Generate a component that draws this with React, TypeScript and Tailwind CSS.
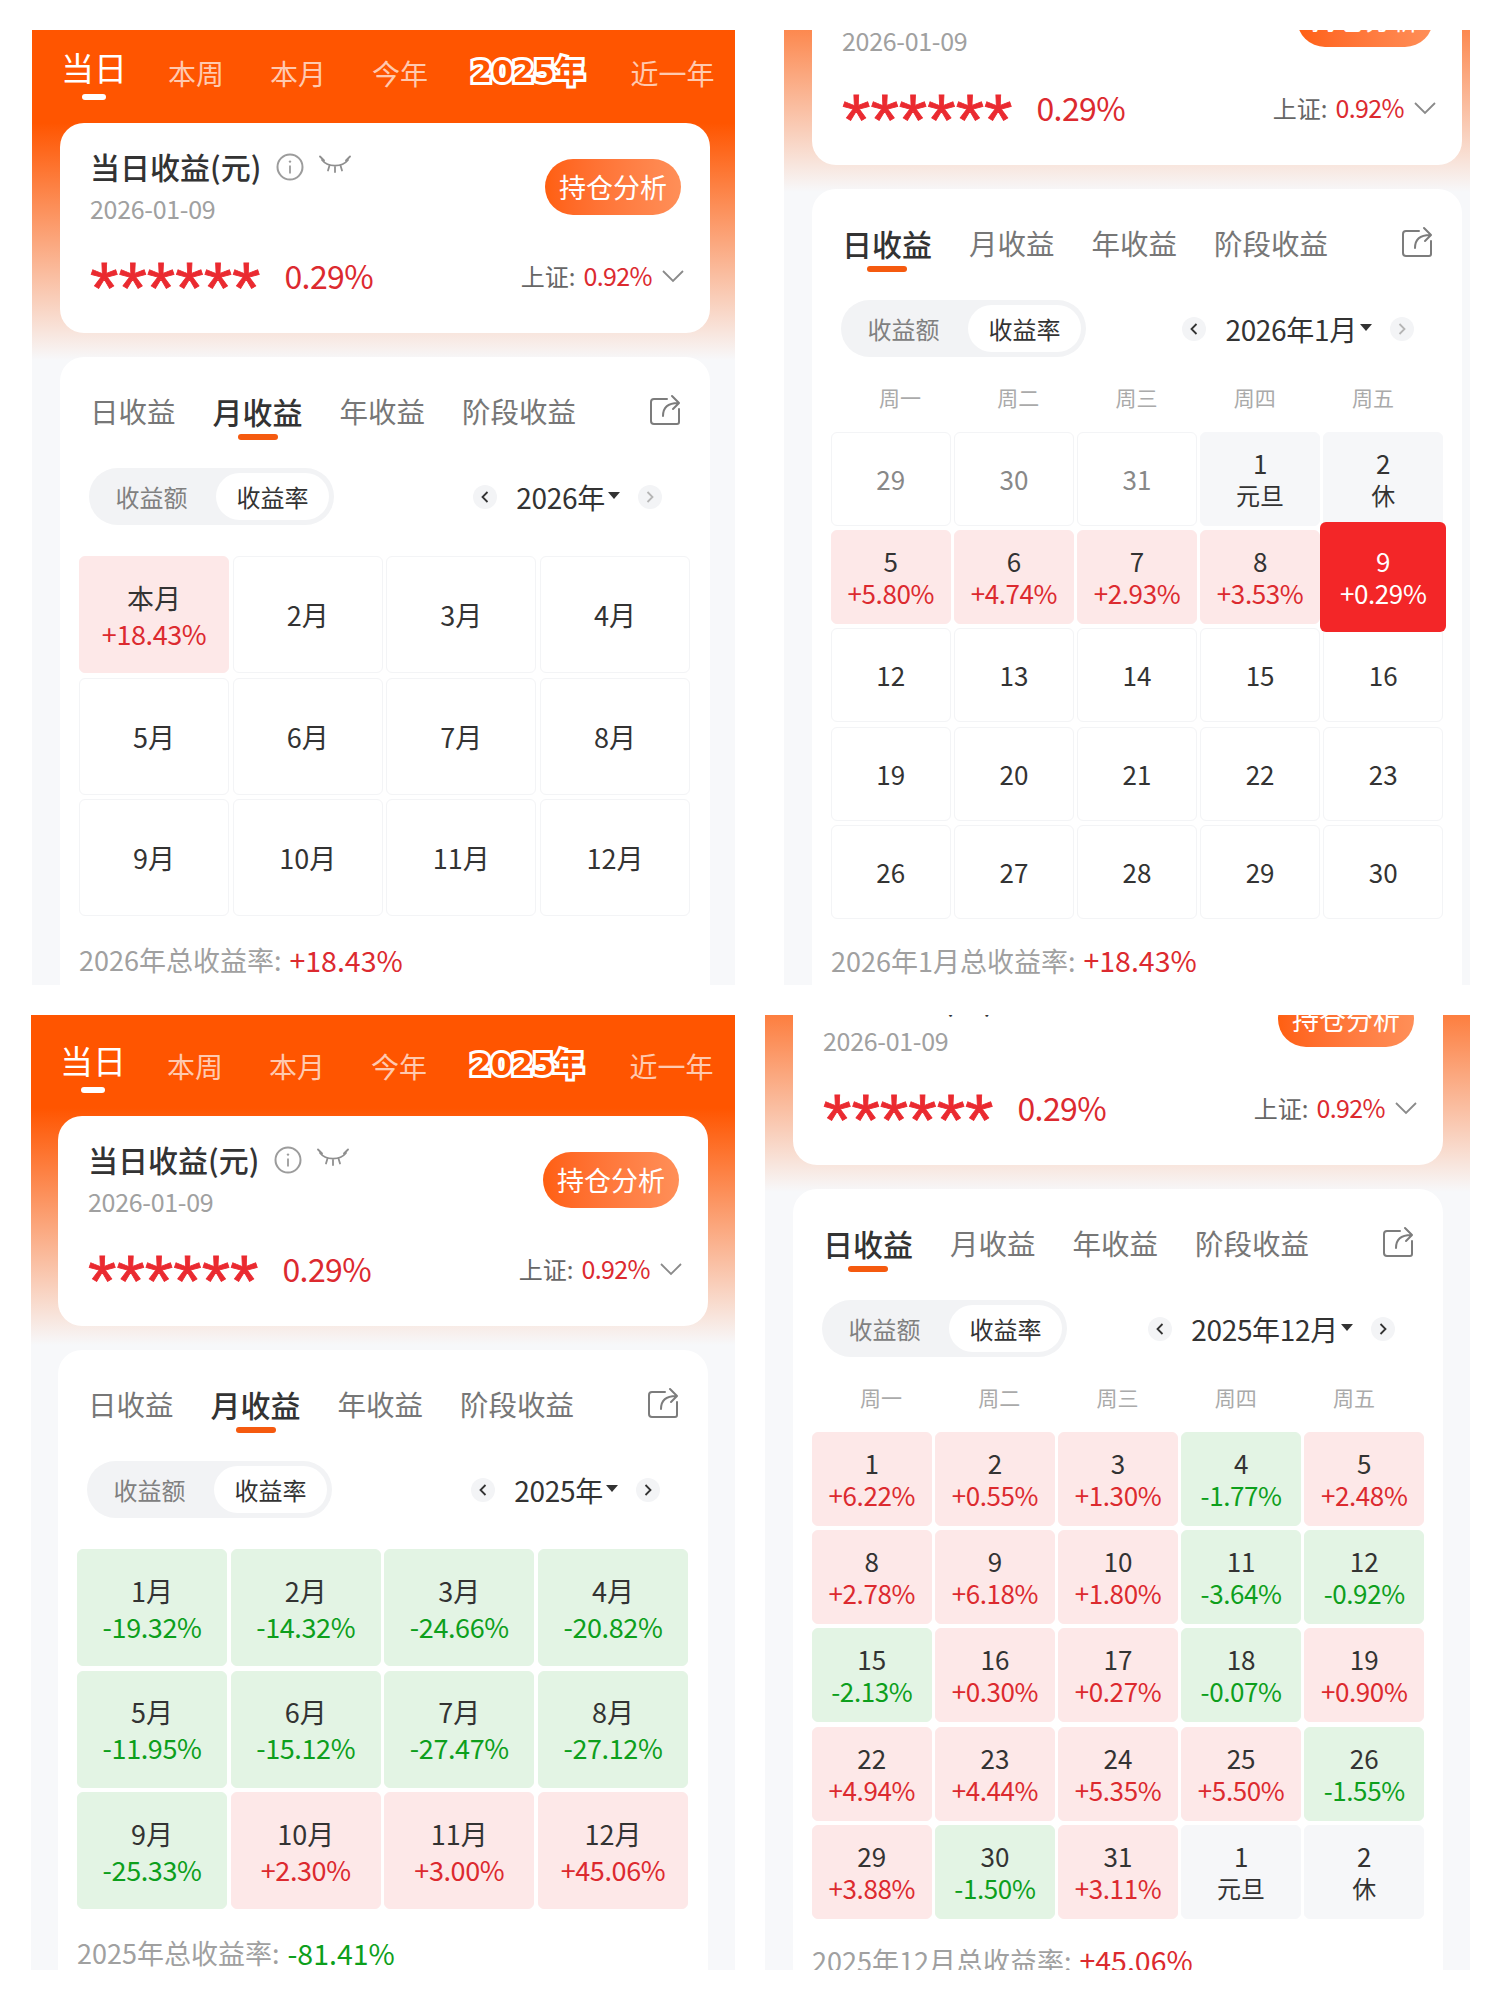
import type { ReactNode } from 'react'

const FONT = "font-['Noto_Sans_CJK_SC',sans-serif]"

type Day = { d: string; v?: string; hol?: boolean; muted?: boolean; active?: boolean }

const parseDays = (rows: string[]): Day[] =>
  rows.map((s) => {
    const [d, v] = s.split(' ')
    return { d, v }
  })

const jan2026: Day[] = [
  { d: '29', muted: true },
  { d: '30', muted: true },
  { d: '31', muted: true },
  { d: '1', v: '元旦', hol: true },
  { d: '2', v: '休', hol: true },
  { d: '5', v: '+5.80%' },
  { d: '6', v: '+4.74%' },
  { d: '7', v: '+2.93%' },
  { d: '8', v: '+3.53%' },
  { d: '9', v: '+0.29%', active: true },
  ...['12', '13', '14', '15', '16', '19', '20', '21', '22', '23', '26', '27', '28', '29', '30'].map((d) => ({ d })),
]

const dec2025: Day[] = [
  ...parseDays([
    '1 +6.22%', '2 +0.55%', '3 +1.30%', '4 -1.77%', '5 +2.48%',
    '8 +2.78%', '9 +6.18%', '10 +1.80%', '11 -3.64%', '12 -0.92%',
    '15 -2.13%', '16 +0.30%', '17 +0.27%', '18 -0.07%', '19 +0.90%',
    '22 +4.94%', '23 +4.44%', '24 +5.35%', '25 +5.50%', '26 -1.55%',
    '29 +3.88%', '30 -1.50%', '31 +3.11%',
  ]),
  { d: '1', v: '元旦', hol: true },
  { d: '2', v: '休', hol: true },
]

const months2026 = [
  { m: '本月', v: '+18.43%' },
  ...['2月', '3月', '4月', '5月', '6月', '7月', '8月', '9月', '10月', '11月', '12月'].map((m) => ({ m, v: '' })),
]

const months2025 = [
  ['1月', '-19.32%'], ['2月', '-14.32%'], ['3月', '-24.66%'], ['4月', '-20.82%'],
  ['5月', '-11.95%'], ['6月', '-15.12%'], ['7月', '-27.47%'], ['8月', '-27.12%'],
  ['9月', '-25.33%'], ['10月', '+2.30%'], ['11月', '+3.00%'], ['12月', '+45.06%'],
].map(([m, v]) => ({ m, v }))

const tone = (v?: string) => {
  if (v?.startsWith('+')) return { bg: 'bg-[#fde8e8] border-[#fde8e8]', text: 'text-[#dc2a2f]' }
  if (v?.startsWith('-')) return { bg: 'bg-[#e3f4e4] border-[#e3f4e4]', text: 'text-[#0d9f1c]' }
  return { bg: 'bg-white border-[#f3f4f6]', text: 'text-[#333]' }
}

function InfoIcon() {
  return (
    <svg width="28" height="28" viewBox="0 0 28 28" fill="none" stroke="#9c9c9c" strokeWidth="2">
      <circle cx="14" cy="14" r="12.500" />
      <path d="M14 12.500v8" strokeWidth="1.800" />
      <circle cx="14" cy="8.600" r="1.200" fill="#9c9c9c" stroke="none" />
    </svg>
  )
}

function EyeClosedIcon() {
  return (
    <svg width="32" height="20" viewBox="0 0 32 20" fill="none" stroke="#8f8f8f" strokeWidth="1.800" strokeLinecap="round">
      <path d="M3 5c6 7.500 20 7.500 26 0" />
      <path d="M1 1.500l4 4M31 1.500l-4 4M10.500 10.500l-1.500 5M21.500 10.500l1.500 5M16 12v5" />
    </svg>
  )
}

function ShareIcon() {
  return (
    <svg width="33" height="33" viewBox="0 0 33 33" fill="none" stroke="#7c7c7c" strokeWidth="2" strokeLinecap="round" strokeLinejoin="round">
      <path d="M18 6H5a3 3 0 0 0-3 3v19a3 3 0 0 0 3 3h23a2 2 0 0 0 2-2V16" />
      <path d="M14 23c0-8 5-13 15-13M23 3l7 7-6 6" />
    </svg>
  )
}

function NavArrow({ dir, dim }: { dir: 'left' | 'right'; dim?: boolean }) {
  return (
    <span className="flex h-[24px] w-[24px] items-center justify-center rounded-full bg-[#f3f4f6]">
      <svg width="10" height="14" viewBox="0 0 10 14" fill="none" stroke={dim ? '#b5b5b5' : '#333'} strokeWidth="1.800">
        <path d={dir === 'left' ? 'M7.500 2L2.500 7l5 5' : 'M2.500 2l5 5-5 5'} />
      </svg>
    </span>
  )
}

function HeaderTabs() {
  return (
    <div className="flex h-[93px] items-start pt-[14px] pl-[29px] text-[28px] text-white/70">
      <div className="flex flex-col items-center">
        <span className="text-[33px] leading-[46px] text-white">当日</span>
        <span className="mt-[4px] h-[6px] w-[24px] rounded-full bg-white" />
      </div>
      <span className="mt-[8px] ml-[41px] leading-[42px]">本周</span>
      <span className="mt-[8px] ml-[46px] leading-[42px]">本月</span>
      <span className="mt-[8px] ml-[46px] leading-[42px]">今年</span>
      <span className="mt-[7px] ml-[43px] font-['DejaVu_Sans','Noto_Sans_CJK_SC',sans-serif] text-[30px] leading-[42px] font-bold text-[#ff5500] [-webkit-text-stroke:6px_white] [paint-order:stroke_fill]">
        2025年
      </span>
      <span className="mt-[8px] ml-[46px] leading-[42px]">近一年</span>
    </div>
  )
}

function SummaryCard() {
  return (
    <div className="h-[210px] rounded-[24px] bg-white pt-[27px] pr-[29px] pl-[30px]">
      <div className="flex items-start justify-between">
        <div>
          <div className="flex h-[36px] items-center">
            <span className="mb-[5px] text-[30px] leading-[36px] font-medium text-[#333]">当日收益(元)</span>
            <span className="mb-[3px] ml-[15px]">
              <InfoIcon />
            </span>
            <span className="mb-[6px] ml-[15px]">
              <EyeClosedIcon />
            </span>
          </div>
          <div className="mt-[8px] text-[25px] leading-[28px] tracking-[-0.300px] text-[#a0a0a0]">2026-01-09</div>
        </div>
        <div className="mt-[9px] flex h-[56px] w-[136px] items-center justify-center rounded-full bg-gradient-to-r from-[#ff5f10] to-[#ff8f58] text-[27px] text-white">
          持仓分析
        </div>
      </div>
      <div className="mt-[34px] flex h-[40px] items-center">
        <span className="h-[40px] font-['Liberation_Sans',sans-serif] text-[73px] leading-[64px] text-[#ea2a30] [-webkit-text-stroke:0.8px_#ea2a30]">******</span>
        <span className="mb-[2px] ml-[24px] text-[32px] tracking-[-0.600px] text-[#dc2a2f]">0.29%</span>
        <span className="mb-[1px] ml-auto text-[24px] text-[#666]">上证:</span>
        <span className="mb-[1px] ml-[8px] text-[25px] tracking-[-0.600px] text-[#dc2a2f]">0.92%</span>
        <svg className="mr-[-3px] ml-[10px]" width="22" height="14" viewBox="0 0 22 14" fill="none" stroke="#8a8a8a" strokeWidth="1.800">
          <path d="M1 2l10 10L21 2" />
        </svg>
      </div>
    </div>
  )
}

function TabBar({ active }: { active: string }) {
  return (
    <div className="flex items-start justify-between pt-[34px] pr-[28px] pl-[30px]">
      <div className="flex gap-[37px]">
        {['日收益', '月收益', '年收益', '阶段收益'].map((t) => (
          <div key={t} className="flex flex-col items-center">
            <span className={t === active ? 'text-[30px] leading-[40px] font-medium text-[#333]' : 'text-[28.500px] leading-[40px] text-[#777]'}>{t}</span>
            {t === active && <span className="mt-[3px] h-[6px] w-[40px] rounded-full bg-[#f55a0f]" />}
          </div>
        ))}
      </div>
      <span className="mt-[2px]">
        <ShareIcon />
      </span>
    </div>
  )
}

function Controls({ label, rightDim }: { label: string; rightDim?: boolean }) {
  return (
    <div className="mt-[28px] flex items-center justify-between pr-[48px] pl-[29px]">
      <div className="flex h-[57px] w-[245px] items-center rounded-full bg-[#f2f3f5] text-[24px]">
        <span className="w-[125px] text-center text-[#808080]">收益额</span>
        <span className="ml-[2px] flex h-[47px] w-[113px] items-center justify-center rounded-full bg-white text-[#333]">收益率</span>
      </div>
      <div className="flex items-center">
        <NavArrow dir="left" />
        <span className="ml-[19px] text-[28px] tracking-[-0.300px] text-[#333]">{label}</span>
        <span className="mt-[-2px] ml-[3px] h-0 w-0 border-x-[6px] border-t-[7px] border-x-transparent border-t-[#333]" />
        <span className="ml-[18px]">
          <NavArrow dir="right" dim={rightDim} />
        </span>
      </div>
    </div>
  )
}

function MonthGrid({ items }: { items: { m: string; v: string }[] }) {
  return (
    <div className="mt-[31px] grid grid-cols-4 gap-x-[3.500px] gap-y-[4.500px] pr-[20px] pl-[19px]">
      {items.map(({ m, v }) => {
        const t = tone(v)
        return (
          <div key={m} className={`flex h-[117px] flex-col items-center justify-center rounded-[6px] border ${t.bg}`}>
            <span className="text-[27px] leading-[37px] text-[#333]">{m}</span>
            {v && <span className={`text-[27px] leading-[35px] tracking-[-0.400px] ${t.text}`}>{v}</span>}
          </div>
        )
      })}
    </div>
  )
}

function DayCell({ day }: { day: Day }) {
  if (day.active) {
    return (
      <div className="relative z-10 -mx-[3px] -my-[8px] flex flex-col items-center justify-center rounded-[6px] bg-[#f32628] text-white">
        <span className="text-[26px] leading-[32px]">{day.d}</span>
        <span className="text-[26px] leading-[32px] tracking-[-0.400px]">{day.v}</span>
      </div>
    )
  }
  const t = day.hol ? { bg: 'bg-[#f6f7f9] border-[#f6f7f9]', text: 'text-[#333]' } : tone(day.v)
  return (
    <div className={`flex h-[94px] flex-col items-center justify-center rounded-[6px] border ${t.bg}`}>
      <span className={`text-[26px] leading-[32px] ${day.muted ? 'text-[#888]' : 'text-[#333]'}`}>{day.d}</span>
      {day.v && <span className={`leading-[32px] ${day.hol ? 'text-[24px]' : 'text-[26px] tracking-[-0.400px]'} ${t.text}`}>{day.v}</span>}
    </div>
  )
}

function DayGrid({ days }: { days: Day[] }) {
  return (
    <>
      <div className="mt-[25px] grid h-[30px] grid-cols-5 pr-[30px] pl-[29px] text-center text-[21px] leading-[30px] text-[#aaa]">
        {['周一', '周二', '周三', '周四', '周五'].map((w) => (
          <span key={w}>{w}</span>
        ))}
      </div>
      <div className="mt-[20px] grid grid-cols-5 gap-x-[3.500px] gap-y-[4.200px] px-[19px]">
        {days.map((day, i) => (
          <DayCell key={i} day={day} />
        ))}
      </div>
    </>
  )
}

function Total({ label, value, gapClass }: { label: string; value: string; gapClass: string }) {
  return (
    <div className={`${gapClass} flex h-[38px] items-center px-[19px] text-[27px] text-[#a0a0a0]`}>
      {label}总收益率:
      <span className={`ml-[8px] text-[28.500px] ${value.startsWith('-') ? 'text-[#0d9f1c]' : 'text-[#dc2a2f]'}`}>{value}</span>
    </div>
  )
}

function Phone({ width, scroll, extraTop, cardClass, children }: { width: string; scroll: string; extraTop: string; cardClass: string; children: ReactNode }) {
  return (
    <div className={`h-[955px] shrink-0 overflow-hidden ${width}`}>
      <div className={`h-[1300px] bg-[linear-gradient(to_bottom,#ff5500_93px,#f7f8fa_330px)] ${scroll}`}>
        <div className={extraTop} />
        <div className="w-[704px]">
          <HeaderTabs />
        </div>
        <div className={cardClass}>
          <SummaryCard />
          <div className="mt-[24px] h-[900px] rounded-[24px] bg-white">{children}</div>
        </div>
      </div>
    </div>
  )
}

export default function App() {
  return (
    <div className={`${FONT} flex h-[2000px] w-[1500px] flex-col gap-[30px] bg-white pt-[30px]`}>
      <div className="flex gap-[49px] pl-[32px]">
        <Phone width="w-[703px]" scroll="" extraTop="" cardClass="ml-[28px] w-[650px]">
          <TabBar active="月收益" />
          <Controls label="2026年" rightDim />
          <MonthGrid items={months2026} />
          <Total label="2026年" value="+18.43%" gapClass="mt-[25px]" />
        </Phone>
        <Phone width="w-[686px]" scroll="-mt-[168px]" extraTop="" cardClass="ml-[28px] w-[650px]">
          <TabBar active="日收益" />
          <Controls label="2026年1月" rightDim />
          <DayGrid days={jan2026} />
          <Total label="2026年1月" value="+18.43%" gapClass="mt-[23px]" />
        </Phone>
      </div>
      <div className="flex gap-[30px] pl-[31px]">
        <Phone width="w-[704px]" scroll="" extraTop="h-[8px]" cardClass="ml-[27px] w-[650px]">
          <TabBar active="月收益" />
          <Controls label="2025年" />
          <MonthGrid items={months2025} />
          <Total label="2025年" value="-81.41%" gapClass="mt-[25px]" />
        </Phone>
        <Phone width="w-[705px]" scroll="-mt-[153px]" extraTop="" cardClass="ml-[28px] w-[650px]">
          <TabBar active="日收益" />
          <Controls label="2025年12月" />
          <DayGrid days={dec2025} />
          <Total label="2025年12月" value="+45.06%" gapClass="mt-[23px]" />
        </Phone>
      </div>
    </div>
  )
}
